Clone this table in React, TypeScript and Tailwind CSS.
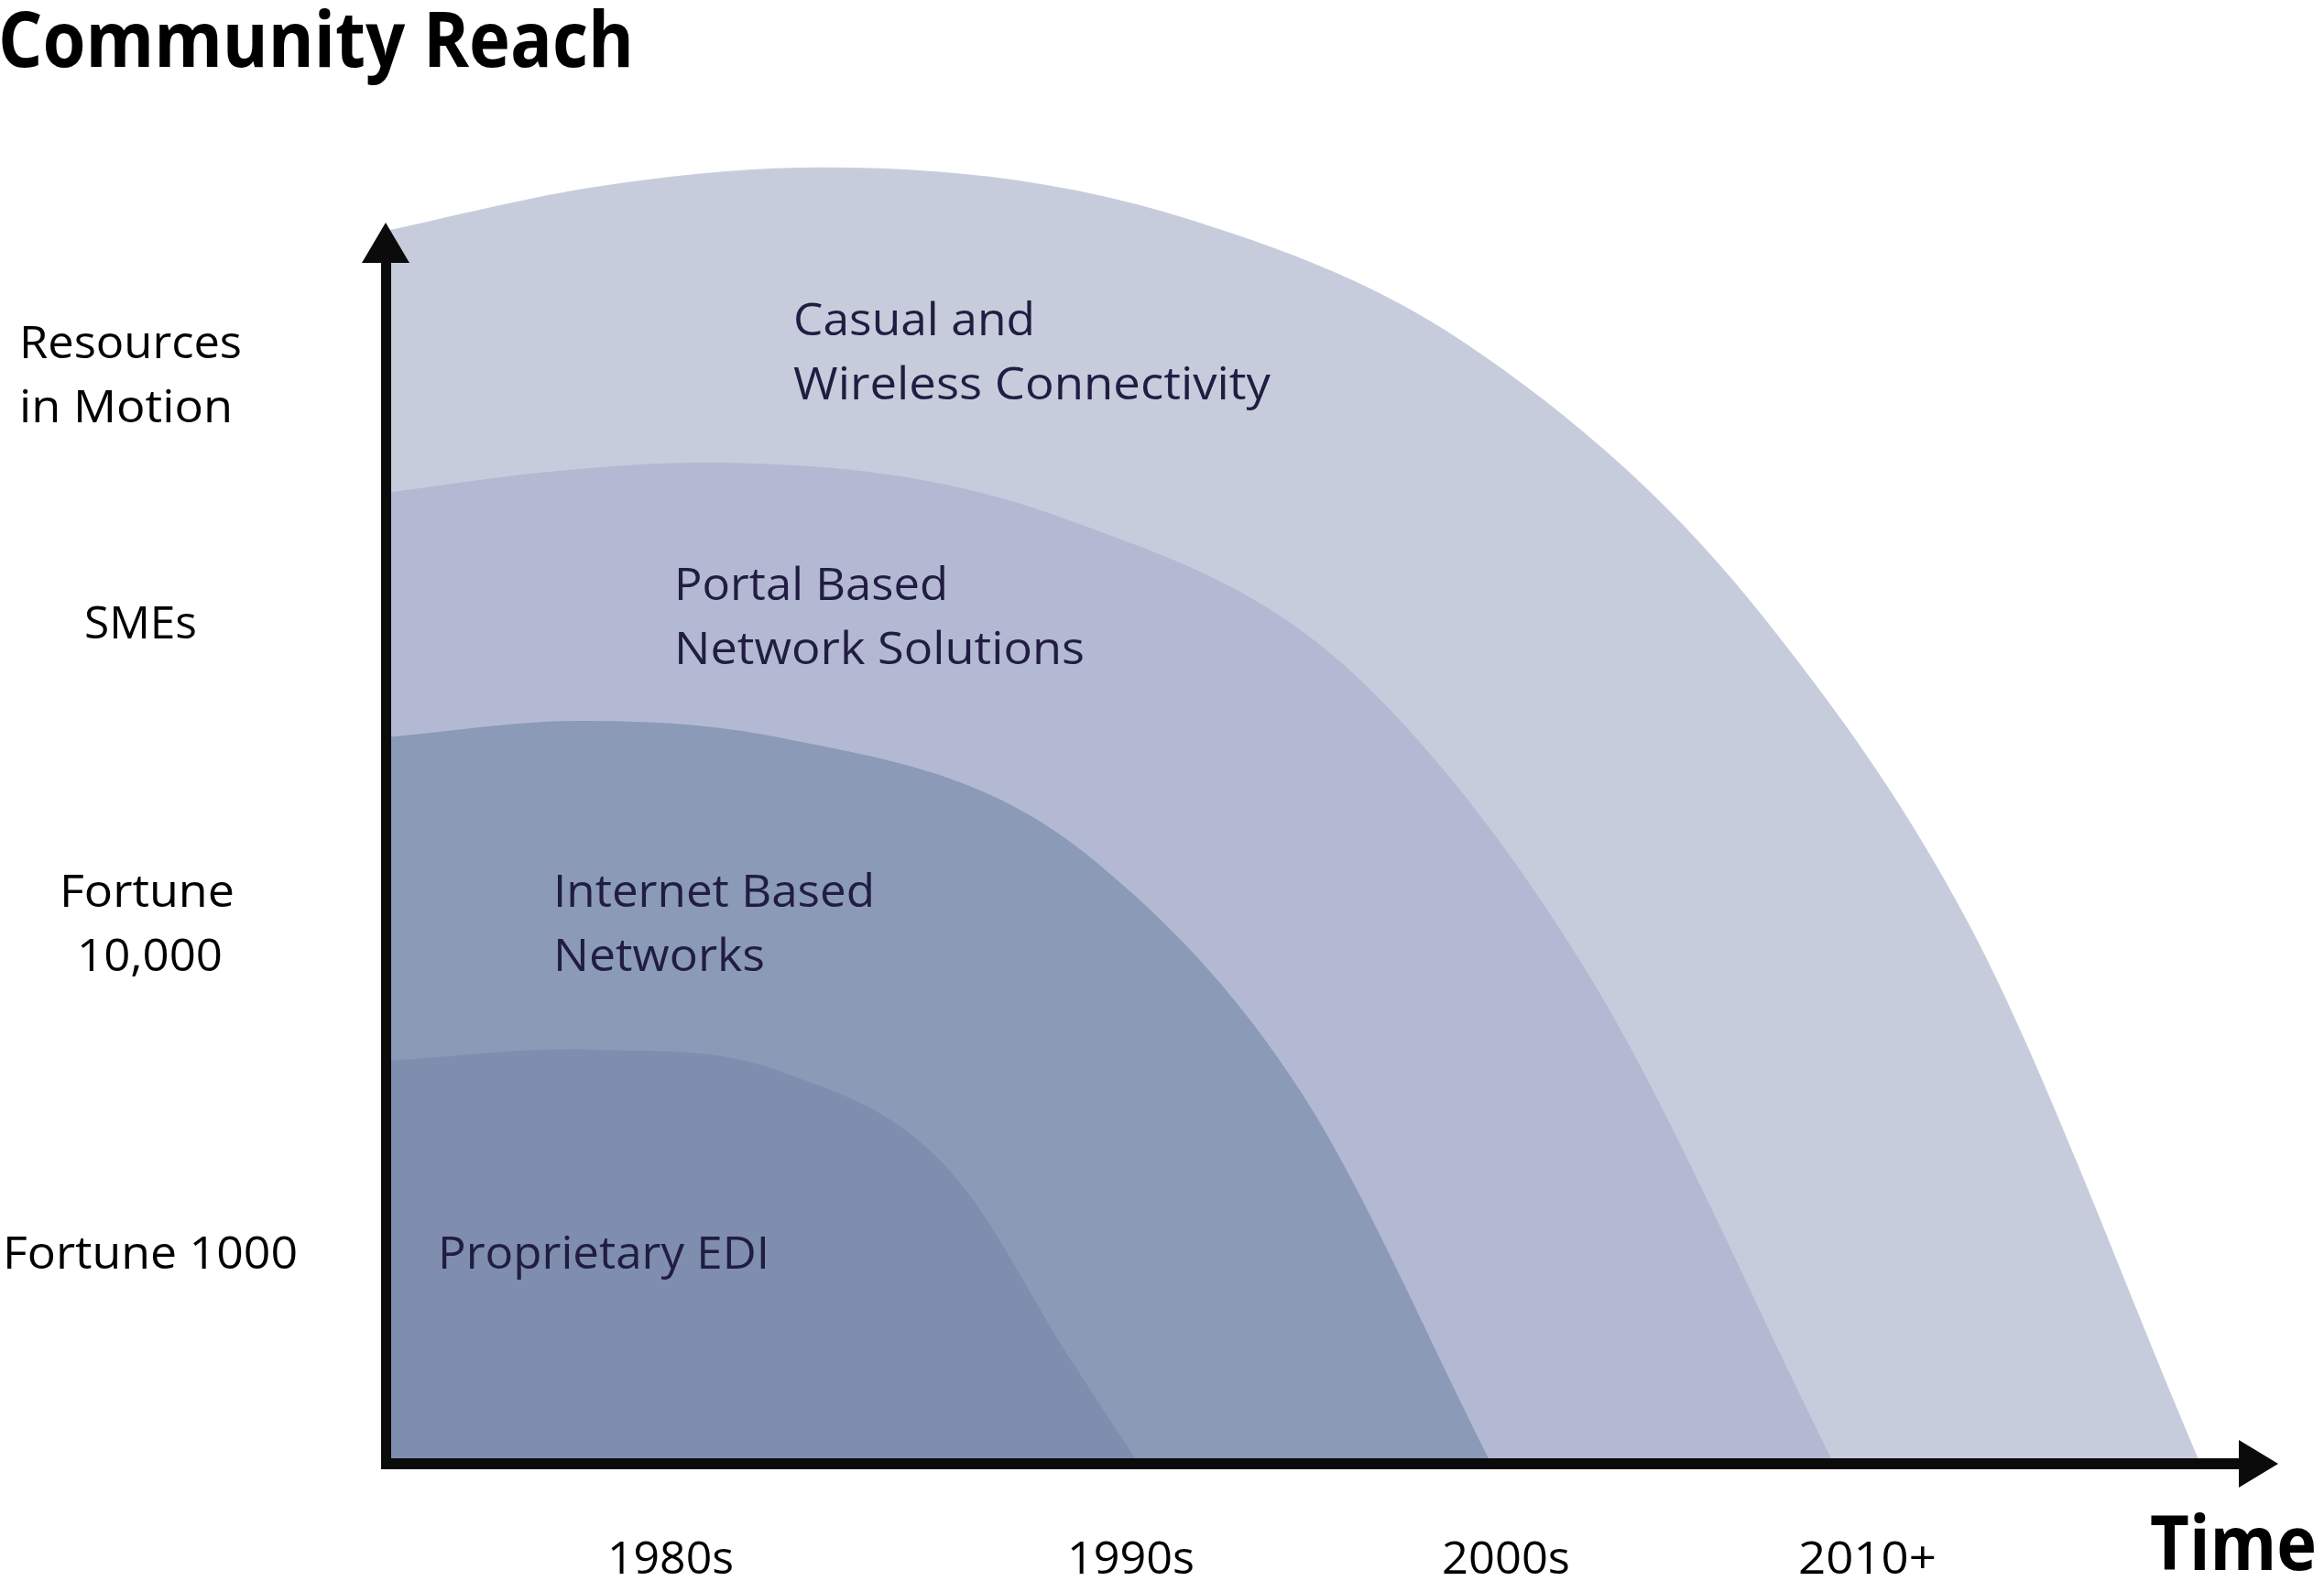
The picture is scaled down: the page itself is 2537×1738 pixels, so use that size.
type Pt = [number, number]

// Cubic Hermite spline y(x) through the sampled edge points, written as beziers.
// Tangents are weighted by the gap widths, so uneven spacing makes no kinks.
function curve(points: Pt[]) {
  const n = points.length
  const h = points.slice(1).map((p, i) => p[0] - points[i][0])
  const d = points.slice(1).map((p, i) => (p[1] - points[i][1]) / h[i])
  const m = points.map((_, i) => {
    if (i === 0) return d[0]
    if (i === n - 1) return d[n - 2]
    return (h[i] * d[i - 1] + h[i - 1] * d[i]) / (h[i - 1] + h[i])
  })
  let path = ""
  for (let i = 0; i < n - 1; i++) {
    const [x1, y1] = points[i]
    const [x2, y2] = points[i + 1]
    const t = h[i] / 3
    path += ` C ${(x1 + t).toFixed(1)} ${(y1 + m[i] * t).toFixed(1)} ${(x2 - t).toFixed(1)} ${(y2 - m[i + 1] * t).toFixed(1)} ${x2} ${y2}`
  }
  return path
}

const BASE = 1598
const AXIS_X = 421
const TOP = 98

function bandPath(points: Pt[]) {
  return `M ${AXIS_X} ${BASE} L ${points[0][0]} ${points[0][1]}${curve(points)} Z`
}

const bands: { color: string; points: Pt[] }[] = [
  {
    color: "#c7ccdd",
    points: [
      [AXIS_X, 252], [650, 204], [874, 183], [1300, 240], [1600, 375], [1930, 680],
      [2150, 1010], [2402, BASE],
    ],
  },
  {
    color: "#b4b9d3",
    points: [
      [AXIS_X, 538], [600, 515], [764, 505], [1159, 565], [1493, 750], [1733, 1062],
      [2002, BASE],
    ],
  },
  {
    color: "#8b9ab7",
    points: [[AXIS_X, 805], [629, 787], [850, 805], [1194, 939], [1424, 1198], [1628, BASE]],
  },
  {
    color: "#7f8dae",
    points: [[AXIS_X, 1158], [645, 1146], [850, 1169], [1051, 1295], [1166, 1480], [1243, BASE]],
  },
]

type Label = { text: string; x: number; y: number; w: number; bold?: boolean; navy?: boolean }

const labels: Label[] = [
  // y axis
  { text: "Resources", x: 21, y: 391, w: 243 },
  { text: "in Motion", x: 21, y: 461, w: 233 },
  { text: "SMEs", x: 92, y: 697, w: 123 },
  { text: "Fortune", x: 65, y: 990, w: 191 },
  { text: "10,000", x: 84, y: 1060, w: 159 },
  { text: "Fortune 1000", x: 3, y: 1385, w: 322 },
  // bands
  { text: "Casual and", x: 866, y: 366, w: 264, navy: true },
  { text: "Wireless Connectivity", x: 866, y: 436, w: 521, navy: true },
  { text: "Portal Based", x: 736, y: 655, w: 299, navy: true },
  { text: "Network Solutions", x: 736, y: 725, w: 448, navy: true },
  { text: "Internet Based", x: 604, y: 990, w: 351, navy: true },
  { text: "Networks", x: 604, y: 1060, w: 231, navy: true },
  { text: "Proprietary EDI", x: 478, y: 1385, w: 362, navy: true },
  // x axis
  { text: "1980s", x: 663, y: 1718, w: 138 },
  { text: "1990s", x: 1165, y: 1718, w: 139 },
  { text: "2000s", x: 1574, y: 1718, w: 140 },
  { text: "2010+", x: 1963, y: 1718, w: 151 },
  { text: "Time", x: 2347, y: 1714, w: 182, bold: true },
]

function Chart() {
  return (
    <svg width={2537} height={1738 - TOP} viewBox={`0 ${TOP} 2537 ${1738 - TOP}`} className="block">
      {bands.map((b) => (
        <path key={b.color} d={bandPath(b.points)} fill={b.color} />
      ))}

      {/* axes */}
      <rect x={416} y={280} width={11} height={1324} fill="#0b0b0c" />
      <polygon points="421,243 447,287 395,287" fill="#0b0b0c" />
      <rect x={416} y={1592} width={2032} height={12} fill="#0b0b0c" />
      <polygon points="2487,1598 2444,1572 2444,1624" fill="#0b0b0c" />

      {labels.map((l) => (
        <text
          key={l.text}
          x={l.x}
          y={l.y}
          textLength={l.w}
          lengthAdjust="spacingAndGlyphs"
          fontFamily="'Open Sans', sans-serif"
          fontSize={l.bold ? 82 : 50}
          fontWeight={l.bold ? 700 : 400}
          fill={l.navy ? "#211d42" : "#000000"}
        >
          {l.text}
        </text>
      ))}
    </svg>
  )
}

export default function App() {
  return (
    <div className="w-[2537px] h-[1738px] overflow-hidden bg-white">
      <h1 className="-mt-[16px] h-[114px] origin-left scale-x-[0.905] -ml-[2px] font-['Open_Sans',sans-serif] text-[84px] font-bold leading-[114px] text-black whitespace-nowrap">
        Community Reach
      </h1>
      <Chart />
    </div>
  )
}
